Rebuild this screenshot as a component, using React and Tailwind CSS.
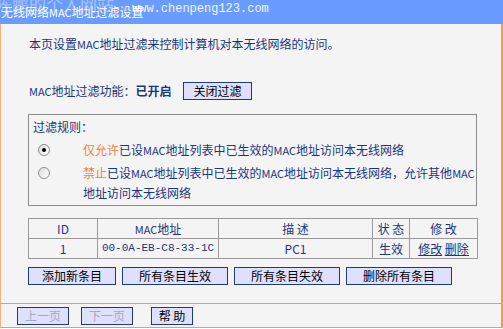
import React from "react";

const navy = "text-[#1b3580]";

function M() {
  return <span className="text-[11px]">MAC</span>;
}

function Radio({ checked }) {
  return (
    <span className="relative inline-block w-[12px] h-[12px] rounded-full border border-[#8c8c8c] bg-gradient-to-br from-[#dcdcdc] to-white">
      {checked && (
        <span className="absolute left-[3px] top-[3px] w-[4px] h-[4px] rounded-full bg-black" />
      )}
    </span>
  );
}

function Btn({ w, children, disabled }) {
  return (
    <div
      className={`${w} h-[18px] flex items-center justify-center bg-[#dfe0fb] border border-[#1f3a78] text-[12px] leading-none ${
        disabled ? "text-[#a9a9b8]" : "text-black"
      }`}
    >
      {children}
    </div>
  );
}

export default function App() {
  const th = `border border-[#9a9a9a] text-center font-normal ${navy} h-[20px] p-0`;
  const td = `border border-[#9a9a9a] text-center ${navy} h-[20px] p-0`;
  return (
    <div
      className="w-[503px] h-[329px] bg-white overflow-hidden text-[12px]"
      style={{ fontFamily: '"Noto Sans CJK SC", "Liberation Sans", sans-serif' }}
    >
      {/* header */}
      <div className="relative h-[24px] bg-[#6a9bff] overflow-hidden">
        <div className="absolute left-[-5px] top-[-6px] flex items-center whitespace-nowrap">
          <span className="text-[17px] leading-[20px] text-white/40">陈鹏的个人网站</span>
        </div>
        <div className="relative pl-[1px] leading-[24px] text-white text-[12px] whitespace-nowrap">
          无线网络<M />地址过滤设置
        </div>
        <div
          className="absolute left-[132px] top-[2px] text-[12px] leading-[14px] text-white/90 whitespace-nowrap"
          style={{ fontFamily: '"Liberation Mono", monospace' }}
        >
          www.chenpeng123.com
        </div>
      </div>

      {/* body */}
      <div className="h-[279px] bg-[#f4f4f4] border-l border-l-[#f6b27c] border-r-2 border-r-[#ff9a3a] pl-[27px]">
        <div className={`pt-[12px] h-[28px] leading-[16px] pl-[1px] ${navy}`}>
          本页设置<M />地址过滤来控制计算机对本无线网络的访问。
        </div>
        <div className="mt-[30px] h-[18px] flex items-center">
          <div className={`w-[155px] pl-[1px] ${navy} whitespace-nowrap`}>
            <M />地址过滤功能：<span className="font-bold">已开启</span>
          </div>
          <Btn w="w-[69px]">关闭过滤</Btn>
        </div>

        <div className="mt-[14px] w-[449px] h-[92px] border border-[#8a8a8a]">
          <div className={`pt-[4px] pl-[4px] leading-[16px] h-[20px] ${navy}`}>过滤规则：</div>
          <div className="mt-[7px] flex items-center h-[16px]">
            <div className="w-[54px] pl-[9px] flex items-center">
              <Radio checked />
            </div>
            <div className={`${navy} whitespace-nowrap`}>
              <span className="text-[#f0823c]">仅允许</span>已设<M />地址列表中已生效的<M />地址访问本无线网络
            </div>
          </div>
          <div className="mt-[5px] flex items-start">
            <div className="w-[54px] pl-[9px] h-[20px] flex items-center">
              <Radio />
            </div>
            <div className={`${navy} whitespace-nowrap leading-[20px]`}>
              <span className="text-[#f0823c]">禁止</span>已设<M />地址列表中已生效的<M />地址访问本无线网络，允许其他<M />
              <br />
              地址访问本无线网络
            </div>
          </div>
        </div>

        <table className="mt-[12px] w-[449px] border-collapse table-fixed">
          <colgroup>
            <col className="w-[69px]" />
            <col className="w-[121px]" />
            <col className="w-[154px]" />
            <col className="w-[37px]" />
            <col className="w-[68px]" />
          </colgroup>
          <thead>
            <tr>
              <th className={th}>ID</th>
              <th className={th}><M />地址</th>
              <th className={th}>描 述</th>
              <th className={th}>状 态</th>
              <th className={th}>修 改</th>
            </tr>
          </thead>
          <tbody>
            <tr>
              <td className={td}>1</td>
              <td className={td} style={{ fontFamily: '"Liberation Mono", monospace', fontSize: "11px" }}>
                00-0A-EB-C8-33-1C
              </td>
              <td className={td}>PC1</td>
              <td className={td}>生效</td>
              <td className={td}>
                <span className="underline">修改</span> <span className="underline">删除</span>
              </td>
            </tr>
          </tbody>
        </table>

        <div className="mt-[8px] flex gap-[6px]">
          <Btn w="w-[88px]">添加新条目</Btn>
          <Btn w="w-[106px]">所有条目生效</Btn>
          <Btn w="w-[106px]">所有条目失效</Btn>
          <Btn w="w-[106px]">删除所有条目</Btn>
        </div>
      </div>

      {/* footer */}
      <div className="h-[25px] bg-[#f4f4f4] border-t border-b border-[#ff9a3a] border-l border-l-[#f6b27c] border-r-2 border-r-[#ff9a3a] pl-[16px] pt-[3px] flex items-start">
        <Btn w="w-[52px]" disabled>上一页</Btn>
        <div className="w-[12px]" />
        <Btn w="w-[52px]" disabled>下一页</Btn>
        <div className="w-[18px]" />
        <Btn w="w-[42px]">帮 助</Btn>
      </div>
    </div>
  );
}
